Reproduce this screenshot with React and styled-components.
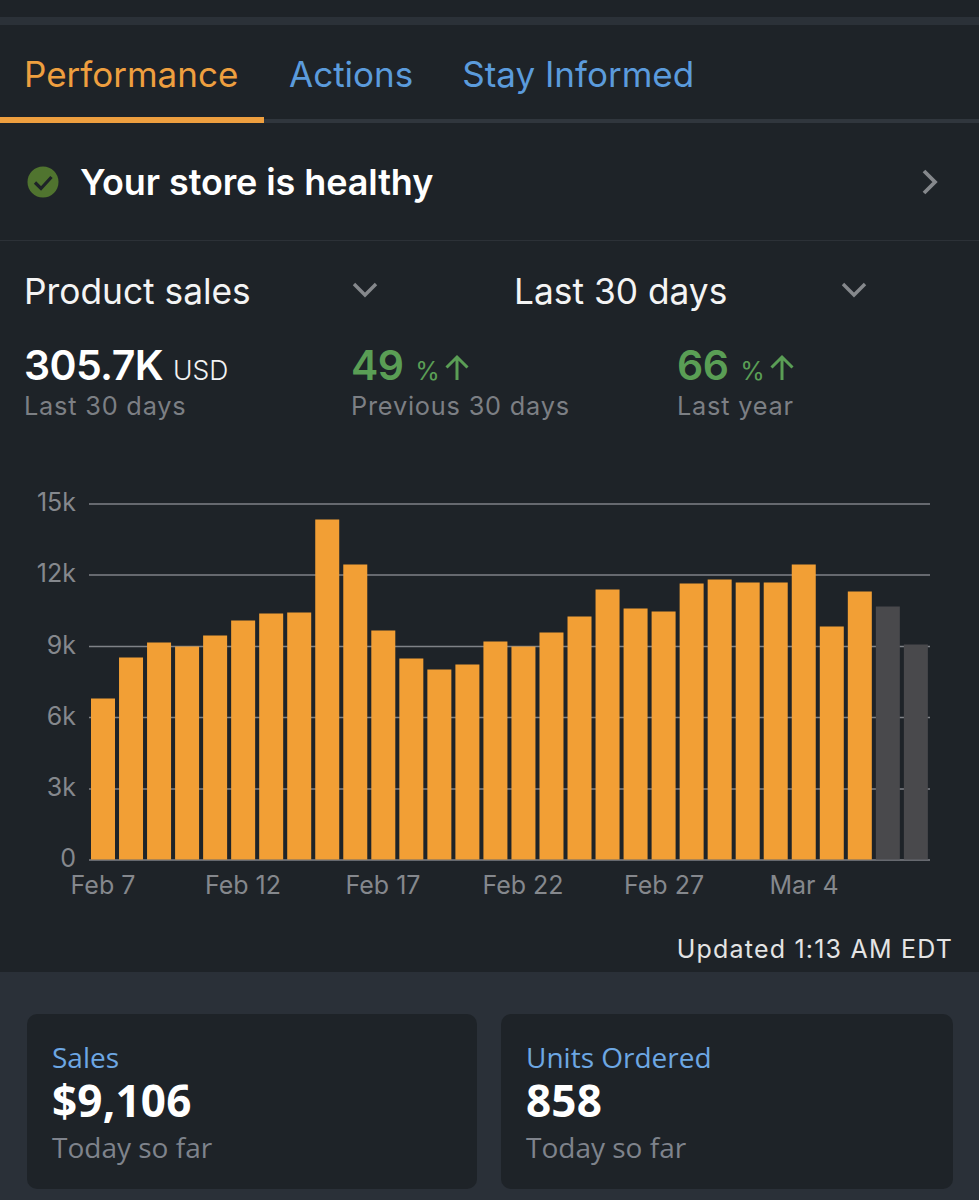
import React from "react";
import styled, { createGlobalStyle } from "styled-components";

const Global = createGlobalStyle`
  html, body { margin: 0; padding: 0; background: #1e2328; }
  * { box-sizing: border-box; }
  body { font-family: Inter, "Liberation Sans", sans-serif; }
`;
const Page = styled.div`width: 979px; height: 1200px; overflow: hidden; background: #1e2328; display: flex; flex-direction: column;`;
const TopGap = styled.div`height: 17px; background: #1e2328;`;
const TopBand = styled.div`height: 8px; background: #2b3138;`;
const Tabs = styled.nav`height: 98px; display: flex; align-items: flex-start; border-bottom: 4px solid #30363d; position: relative;`;
const Tab = styled.div`
  font-size: 35px; line-height: 40px; padding-top: 29px; height: 98px;
  color: ${p => p.$active ? "#ee9f3f" : "#5b9bdc"};
  margin-left: ${p => p.$ml}px; position: relative;
  width: ${p => p.$w ? p.$w + "px" : "auto"};
  ${p => p.$active && "border-bottom: 6px solid #ee9f3f; padding-left: 24px; margin-bottom: -4px;"}
`;
const Health = styled.div`height: 118px; display: flex; align-items: center; padding: 0 40px 0 27px; border-bottom: 1px solid #2c3137;`;
const HealthText = styled.div`flex: 1; margin-left: 21px; font-size: 36px; font-weight: 600; color: #fff; letter-spacing: -0.1px;`;
const Selectors = styled.div`display: flex; height: 100px; padding-top: 29px;`;
const Selector = styled.div`width: ${p => p.$w}px; display: flex; justify-content: space-between; padding-left: ${p => p.$pl}px; padding-right: ${p => p.$pr}px;`;
const SelectLabel = styled.div`font-size: 35.3px; line-height: 44px; color: #f4f4f4;`;
const Stats = styled.div`display: flex; height: 90px; padding-left: 24px;`;
const Stat = styled.div`width: ${p => p.$w}px;`;
const StatTop = styled.div`display: flex; align-items: baseline; height: 48px; line-height: 48px;`;
const StatValue = styled.span`font-size: 41px; font-weight: 600; letter-spacing: -0.6px; color: ${p => p.$green ? "#5a9e55" : "#fff"};`;
const StatUnit = styled.span`font-size: ${p => p.$green ? 25 : 26.5}px; margin-left: ${p => p.$green ? 12 : 10}px; font-weight: ${p => p.$green ? 400 : 300}; color: ${p => p.$green ? "#5a9e55" : "#f2f2f2"};`;
const Arrow = styled.svg`width: 26px; height: 28px; margin-left: 4px; align-self: center; margin-top: 6px;`;
const StatCaption = styled.div`font-size: 25.3px; line-height: 34px; letter-spacing: 0.8px; color: #7c7f84;`;
const Chart = styled.svg`display: block; width: 979px; height: 500px; flex: none;`;
const AxisText = styled.text`font-family: Inter, "Liberation Sans", sans-serif; font-size: 25px; fill: #85888d;`;
const Updated = styled.div`height: 41px; padding-right: 26px; text-align: right; font-size: 25px; line-height: 36px; letter-spacing: 1.2px; color: #e4e4e4;`;
const Cards = styled.section`flex: 1; background: #2a3038; display: flex; gap: 24px; padding: 42px 26px 0 27px; align-items: flex-start;`;
const Card = styled.div`flex: ${p => p.$w}px 0 0; width: ${p => p.$w}px; height: 175px; background: #1e2328; border-radius: 10px; padding: 26px 25px;`;
const CardLabel = styled.div`font-family: "Open Sans", sans-serif; font-size: 28px; line-height: 35px; color: #6da7e3;`;
const CardValue = styled.div`font-family: "Open Sans", sans-serif; font-size: 44px; font-weight: 700; line-height: 50px; letter-spacing: 0.2px; color: #fff;`;
const CardCaption = styled.div`font-family: "Open Sans", sans-serif; font-size: 28px; line-height: 44px; color: #7f838c;`;

const Chevron = () => (
  <svg width="26" height="18" viewBox="0 0 26 18" style={{ marginTop: 11 }}>
    <path d="M2 3 L13 14 L24 3" fill="none" stroke="#85888c" strokeWidth="3.4" />
  </svg>
);
const Up = () => (
  <Arrow viewBox="0 0 26 28"><path d="M13 26V3M2.5 13.5 13 3l10.5 10.5" fill="none" stroke="#5a9e55" strokeWidth="3" /></Arrow>
);

const tops = [699,658,643,647,636,621,614,613,520,565,631,659,670,665,642,647,633,617,590,609,612,584,580,583,583,565,627,592,607,645];
const grid = [["15k",504],["12k",575],["9k",646.5],["6k",717.5],["3k",789],["0",860]];
const xt = [["Feb 7",103],["Feb 12",243],["Feb 17",383],["Feb 22",523],["Feb 27",664],["Mar 4",804]];

export default function App() {
  return (
    <Page>
      <Global />
      <TopGap /><TopBand />
      <Tabs>
        <Tab $active $w={264}>Performance</Tab>
        <Tab $ml={25}>Actions</Tab>
        <Tab $ml={49}>Stay Informed</Tab>
      </Tabs>
      <Health>
        <svg width="32" height="32" viewBox="0 0 32 32">
          <circle cx="16" cy="16" r="15.5" fill="#50742f" />
          <path d="M8 16.5l6 6L24.5 11" fill="none" stroke="#1e2328" strokeWidth="3.2" />
        </svg>
        <HealthText>Your store is healthy</HealthText>
        <svg width="18" height="28" viewBox="0 0 18 28"><path d="M3 3l11 11L3 25" fill="none" stroke="#85888c" strokeWidth="3.8" /></svg>
      </Health>
      <Selectors>
        <Selector $w={490} $pl={24} $pr={112}><SelectLabel>Product sales</SelectLabel><Chevron /></Selector>
        <Selector $w={489} $pl={24} $pr={112}><SelectLabel>Last 30 days</SelectLabel><Chevron /></Selector>
      </Selectors>
      <Stats>
        <Stat $w={327}>
          <StatTop><StatValue>305.7K</StatValue><StatUnit>USD</StatUnit></StatTop>
          <StatCaption>Last 30 days</StatCaption>
        </Stat>
        <Stat $w={326}>
          <StatTop><StatValue $green>49</StatValue><StatUnit $green>%</StatUnit><Up /></StatTop>
          <StatCaption>Previous 30 days</StatCaption>
        </Stat>
        <Stat $w={300}>
          <StatTop><StatValue $green>66</StatValue><StatUnit $green>%</StatUnit><Up /></StatTop>
          <StatCaption>Last year</StatCaption>
        </Stat>
      </Stats>
      <Chart viewBox="0 431 979 500">
        {grid.map(([l, y]) => (
          <g key={l}>
            <line x1="89" x2="930" y1={y} y2={y} stroke="#7f8287" strokeWidth="1.6" />
            <AxisText x="76" y={y + 7} textAnchor="end">{l}</AxisText>
          </g>
        ))}
        {tops.map((t, i) => (
          <rect key={i} x={91 + i * 28.03} y={t - 0.5} width="24" height={860 - t} fill={i >= 28 ? "#49494c" : "#f29f35"} />
        ))}
        {xt.map(([l, x]) => <AxisText key={l} x={x} y="894" textAnchor="middle">{l}</AxisText>)}
      </Chart>
      <Updated>Updated 1:13 AM EDT</Updated>
      <Cards>
        <Card $w={450}>
          <CardLabel>Sales</CardLabel><CardValue>$9,106</CardValue><CardCaption>Today so far</CardCaption>
        </Card>
        <Card $w={452}>
          <CardLabel>Units Ordered</CardLabel><CardValue>858</CardValue><CardCaption>Today so far</CardCaption>
        </Card>
      </Cards>
    </Page>
  );
}
